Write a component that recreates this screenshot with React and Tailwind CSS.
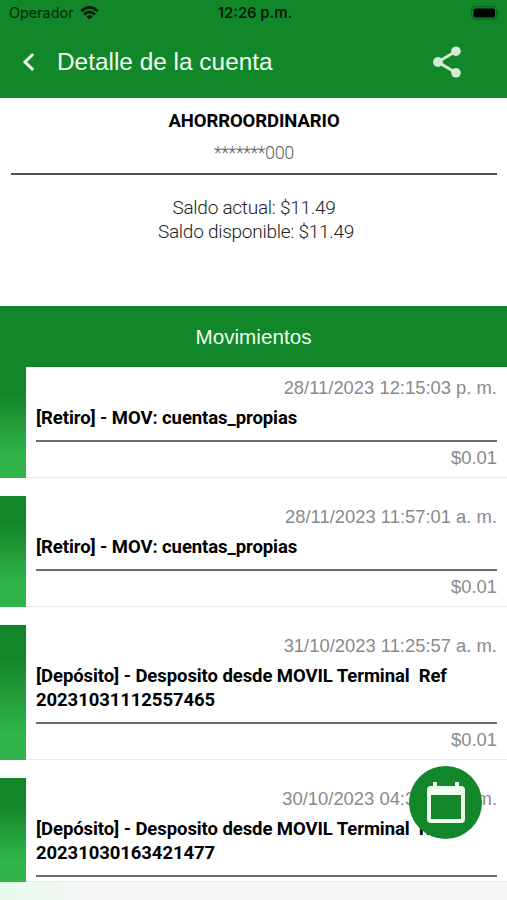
import React from "react";

const movements = [
  { date: "28/11/2023 12:15:03 p. m.", lines: ["[Retiro] - MOV: cuentas_propias"], amount: "$0.01", size: "h-[111px]", gap: "mb-[18px]" },
  { date: "28/11/2023 11:57:01 a. m.", lines: ["[Retiro] - MOV: cuentas_propias"], amount: "$0.01", size: "h-[111px]", gap: "mb-[18px]" },
  { date: "31/10/2023 11:25:57 a. m.", lines: ["[Depósito] - Desposito desde MOVIL Terminal  Ref", "20231031112557465"], amount: "$0.01", size: "h-[135px]", gap: "mb-[18px]" },
  { date: "30/10/2023 04:34:21 p. m.", lines: ["[Depósito] - Desposito desde MOVIL Terminal  Ref", "20231030163421477"], amount: null, size: "h-[104px]", gap: "" },
];

function Movement({ date, lines, amount, size, gap }) {
  return (
    <article className={`flex ${size} ${gap}`}>
      <div className="w-[26px] shrink-0 bg-linear-to-b from-[#128729] from-25% to-[#31b44b] to-80%" />
      <div className="flex-1 border-b border-[#ececec] px-[10px]">
        <p className="mt-[9px] h-6 text-right font-['Liberation_Sans',Arial,sans-serif] text-[18.4px] leading-6 whitespace-pre text-[#8a8a8a]">{date}</p>
        <div className="mt-[6px]">
          {lines.map((line) => (
            <p key={line} className="h-6 text-[18.5px] leading-6 font-bold tracking-[-0.08px] whitespace-pre text-black">{line}</p>
          ))}
        </div>
        <div className="mt-[10px] h-[2px] bg-[#6b6b6b]" />
        {amount && (
          <p className="mt-[4px] text-right font-['Liberation_Sans',Arial,sans-serif] text-[18.4px] leading-6 text-[#8a8a8a]">{amount}</p>
        )}
      </div>
    </article>
  );
}

function StatusBar() {
  return (
    <div className="grid h-[26px] grid-cols-3 items-center pr-[6px] pl-[9px] font-[Inter,sans-serif] text-[14.4px] text-[#032b0a]">
      <div className="flex items-center gap-[6px]">
        <span>Operador</span>
        <svg className="h-[14px] w-[19px]" viewBox="0 0 19 14" fill="none" stroke="#001b05" strokeWidth="2.8">
          <path d="M1.2 5.2Q9.5-2.4 17.8 5.2" />
          <path d="M4.1 8.4Q9.5 3.6 14.9 8.4" />
          <path d="M9.5 13.5L6.3 10.5Q9.5 8 12.7 10.5Z" fill="#001b05" stroke="none" />
        </svg>
      </div>
      <span className="text-center text-[14.8px] font-semibold whitespace-nowrap text-[#001b05]">12:26 p.m.</span>
      <svg className="h-[14px] w-[30px] justify-self-end" viewBox="0 0 30 14">
        <rect x=".7" y=".7" width="25" height="12.6" rx="4" fill="none" stroke="#0b641c" strokeWidth="1.2" />
        <rect x="2.5" y="2.5" width="21.5" height="9" rx="2" fill="#000" />
        <path d="M27.2 5.2Q30 7 27.2 8.8Z" fill="#0b641c" />
      </svg>
    </div>
  );
}

export default function App() {
  return (
    <div className="relative flex h-[900px] w-[507px] flex-col overflow-hidden bg-white font-[Roboto,sans-serif]">
      <header className="h-[98px] shrink-0 bg-[#128729]">
        <StatusBar />
        <div className="flex h-[72px] items-center pr-[44px] pl-[22px]">
          <svg className="h-[20px] w-[14px]" viewBox="0 0 14 20" fill="none" stroke="#effff0" strokeWidth="3">
            <path d="M11.2 2L3 10L11.2 18" />
          </svg>
          <h1 className="ml-[21px] flex-1 font-['Liberation_Sans',Arial,sans-serif] text-[24.4px] text-[#effff0]">Detalle de la cuenta</h1>
          <svg className="h-[32px] w-[30px]" viewBox="0 0 30 32" fill="#d2edd5" stroke="#d2edd5">
            <path d="M23 5.2L4.9 16L23 26.8" fill="none" strokeWidth="3" />
            <circle cx="23" cy="5.2" r="4.8" stroke="none" />
            <circle cx="4.9" cy="16" r="4.9" stroke="none" />
            <circle cx="23" cy="26.8" r="4.8" stroke="none" />
          </svg>
        </div>
      </header>

      <section className="h-[208px] shrink-0 pt-[11px] pr-[10px] pl-[11px] text-center">
        <h2 className="h-6 text-[18.5px] leading-6 font-bold tracking-[-0.08px] text-black">AHORROORDINARIO</h2>
        <p className="mt-[8px] h-6 text-[18px] leading-6 font-light tracking-[-0.35px] text-[#606060]">*******000</p>
        <div className="mt-[8px] h-[2px] bg-[#4f4f4f]" />
        <div className="mt-[21px] text-[19px] leading-6 font-light tracking-[-0.26px] text-[#222]">
          <p>Saldo actual: $11.49</p>
          <p className="pl-[4px]">Saldo disponible: $11.49</p>
        </div>
      </section>

      <div className="flex h-[61px] shrink-0 items-center justify-center bg-[#128729] font-['Liberation_Sans',Arial,sans-serif] text-[20.7px] text-[#effff0]">
        Movimientos
      </div>

      <main className="shrink-0">
        {movements.map((m) => (
          <Movement key={m.date} {...m} />
        ))}
      </main>
      <footer className="flex-1 bg-linear-to-r from-[#e6faea] to-[#f7f7f7] to-20%" />

      <button aria-label="Calendario" className="absolute top-[766px] left-[409px] flex size-[73px] items-center justify-center rounded-full bg-[#128729]">
        <svg className="h-[42px] w-[38px]" viewBox="0 0 38 42" fill="#effff0">
          <path fillRule="evenodd" d="M6 0H10V4H28V0H32V4H34Q38 4 38 8V37Q38 41 34 41H4Q0 41 0 37V8Q0 4 4 4H6ZM4 13V37H34V13Z" />
        </svg>
      </button>
    </div>
  );
}
